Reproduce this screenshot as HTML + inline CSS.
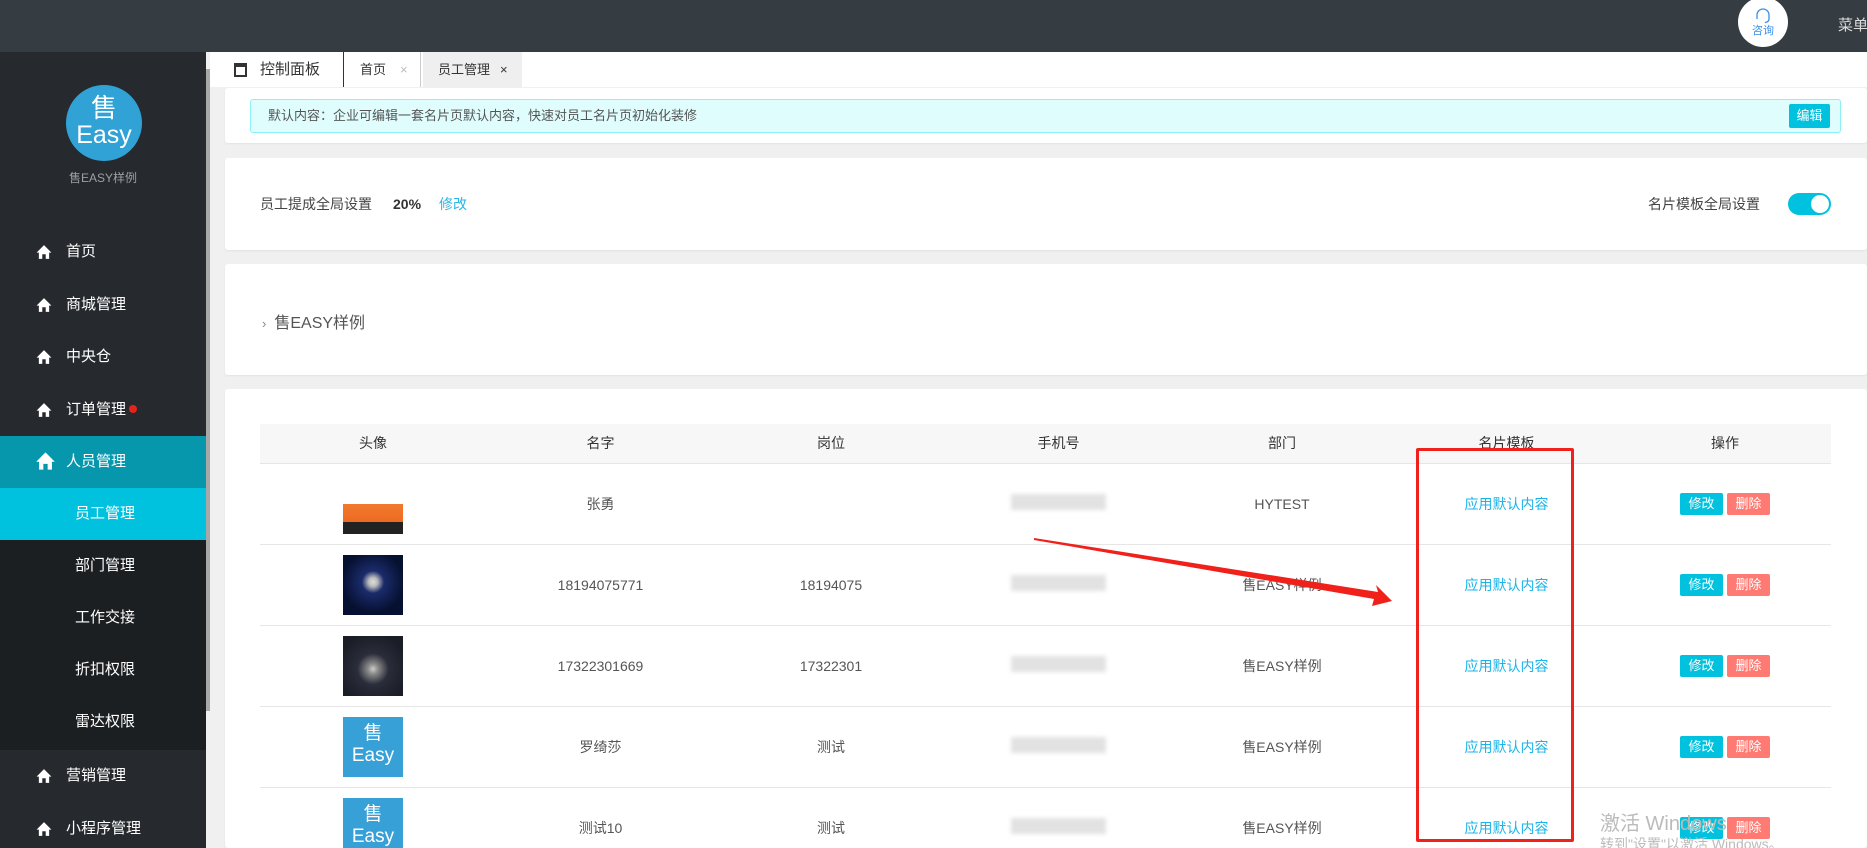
<!DOCTYPE html>
<html style="overflow:hidden;width:1867px;height:848px"><head><meta charset="utf-8"><style>
*{margin:0;padding:0;box-sizing:border-box}
body{width:1867px;height:848px;overflow:hidden;position:relative;background:#f0f0f0;font-family:"Liberation Sans","Noto Sans CJK SC",sans-serif;font-size:14px;color:#555}
.abs{position:absolute}
#top{left:0;top:0;width:1867px;height:52px;background:#363d42}
#side{left:0;top:52px;width:206px;height:796px;background:#262a2e}
.mi{position:absolute;left:0;width:206px;height:52px;line-height:52px;color:#fff;font-size:15px;padding-left:66px;white-space:nowrap}
.mi svg{position:absolute;left:36px;top:18px}
.sub{position:absolute;left:0;width:206px;height:52px;line-height:52px;color:#fff;font-size:15px;padding-left:75px;background:#1c1f22}
.card{position:absolute;left:225px;width:1642px;background:#fff;border-radius:3px;box-shadow:0 1px 2px rgba(0,0,0,.06)}
table{position:absolute;left:260px;top:424px;width:1571px;border-collapse:collapse;table-layout:fixed}
th{height:39px;background:#f7f7f7;font-weight:normal;color:#333;font-size:14px;border-bottom:1px solid #e6e6e6}
td{height:81px;text-align:center;border-bottom:1px solid #e6e6e6;color:#555;font-size:14px}
.lnk{color:#1ab4e8}
.b1,.b2{display:inline-block;width:43px;height:22px;line-height:22px;color:#fff;font-size:13px;border-radius:2px}
.b1{background:#00c1de}.b2{background:#ff7a72;margin-left:4px}
.av{width:60px;height:60px;margin:0 auto;display:block}
.blur{display:inline-block;width:95px;height:16px;background:#e2e2e2;filter:blur(2px)}
.ez{background:#37a0d6;color:#fff;text-align:center;font-size:19px;line-height:22px;padding-top:6px}
</style></head><body>
<div id="top" class="abs"></div>
<div class="abs" style="left:1738px;top:-3px;width:50px;height:50px;border-radius:50%;background:#fff;text-align:center">
<svg width="20" height="18" viewBox="0 0 20 18" style="margin-top:10px"><path d="M4 11V8a6 6 0 0 1 12 0v3M4 9v3M16 9v3M16 12q0 3-4 3.5" fill="none" stroke="#3a8ee6" stroke-width="1.3"/></svg>
<div style="font-size:11px;color:#3a8ee6;line-height:10px;margin-top:-2px">咨询</div></div>
<div class="abs" style="left:1838px;top:14px;color:#ddd;font-size:15px;white-space:nowrap">菜单</div>

<div id="side" class="abs">
<div class="abs" style="left:66px;top:33px;width:76px;height:76px;border-radius:50%;background:#30a2d6;color:#fff;text-align:center;font-size:26px;line-height:26px;padding-top:10px">售<br><span style="font-size:25px">Easy</span></div>
<div class="abs" style="left:0;top:117px;width:206px;text-align:center;color:#9aa0a6;font-size:12px">售EASY样例</div>
</div>
<div class="abs" style="left:206px;top:52px;width:4px;height:796px;background:#f0f0f0"></div>
<div class="abs" style="left:206px;top:69px;width:4px;height:642px;background:#a8a8a8"></div>

<svg width="0" height="0" style="position:absolute"><defs><symbol id="h" viewBox="0 0 14 14"><path d="M7 1L0.5 7.5H2.5V13H5.5V9H8.5V13H11.5V7.5H13.5Z" fill="#fff"/></symbol></defs></svg>
<div class="mi" style="top:226px"><svg width="16" height="16"><use href="#h"/></svg>首页</div>
<div class="mi" style="top:279px"><svg width="16" height="16"><use href="#h"/></svg>商城管理</div>
<div class="mi" style="top:331px"><svg width="16" height="16"><use href="#h"/></svg>中央仓</div>
<div class="mi" style="top:384px"><svg width="16" height="16"><use href="#h"/></svg>订单管理<span style="display:inline-block;width:8px;height:8px;border-radius:50%;background:#e5231b;margin-left:3px;vertical-align:1px"></span></div>
<div class="mi" style="top:436px;background:#0797ad"><svg width="21" height="20" style="left:35px;top:15px"><use href="#h"/></svg>人员管理</div>
<div class="sub" style="top:488px;background:#00c1de">员工管理</div>
<div class="sub" style="top:540px">部门管理</div>
<div class="sub" style="top:592px">工作交接</div>
<div class="sub" style="top:644px">折扣权限</div>
<div class="sub" style="top:696px;height:54px">雷达权限</div>
<div class="mi" style="top:750px"><svg width="16" height="16"><use href="#h"/></svg>营销管理</div>
<div class="mi" style="top:803px"><svg width="16" height="16"><use href="#h"/></svg>小程序管理</div>

<!-- tabs -->
<div class="abs" style="left:210px;top:52px;width:1657px;height:35px;background:#fff"></div>
<div class="abs" style="left:234px;top:52px;width:110px;height:35px;line-height:35px;font-size:15px;color:#333;padding-left:26px;border-right:1px solid #333">
<span style="position:absolute;left:0;top:11px;width:13px;height:14px;border:2px solid #333;border-top-width:4px"></span>控制面板</div>
<div class="abs" style="left:345px;top:52px;width:76px;height:35px;line-height:35px;font-size:13px;color:#333;padding-left:15px;border-right:1px solid #ccc">首页<span style="color:#bbb;margin-left:14px">×</span></div>
<div class="abs" style="left:423px;top:52px;width:99px;height:35px;line-height:35px;font-size:13px;color:#333;padding-left:15px;background:#efefef">员工管理<span style="margin-left:10px">×</span></div>

<div class="card" style="top:88px;height:55px"></div>
<div class="abs" style="left:250px;top:99px;width:1591px;height:34px;background:#e0fdfd;border:1px solid #8ef0f5;border-radius:3px;line-height:32px;padding-left:17px;font-size:13px;color:#555">默认内容：企业可编辑一套名片页默认内容，快速对员工名片页初始化装修
<span class="abs" style="right:10px;top:4px;width:41px;height:24px;line-height:24px;background:#00c1de;color:#fff;text-align:center;border-radius:2px;font-size:13px">编辑</span></div>

<div class="card" style="top:158px;height:92px"></div>
<div class="abs" style="left:260px;top:194px;font-size:14px;color:#444">员工提成全局设置<b style="margin-left:21px;color:#333">20%</b><span style="margin-left:18px;color:#2cb5e8">修改</span></div>
<div class="abs" style="left:1648px;top:194px;font-size:14px;color:#444">名片模板全局设置</div>
<div class="abs" style="left:1788px;top:193px;width:43px;height:22px;border-radius:11px;background:#00c1de"><span class="abs" style="right:2px;top:2px;width:18px;height:18px;border-radius:50%;background:#fff"></span></div>

<div class="card" style="top:264px;height:111px"></div>
<div class="abs" style="left:262px;top:309px;font-size:16px;color:#555"><span style="color:#888;font-size:13px;margin-right:8px">›</span>售EASY样例</div>

<div class="card" style="top:389px;height:459px"></div>
<table>
<colgroup><col style="width:226px"><col style="width:229px"><col style="width:232px"><col style="width:223px"><col style="width:224px"><col style="width:225px"><col style="width:212px"></colgroup>
<tr><th>头像</th><th>名字</th><th>岗位</th><th>手机号</th><th>部门</th><th>名片模板</th><th>操作</th></tr>
<tr><td><div class="av" style="background:linear-gradient(180deg,#fff 0,#fff 50%,#f07a30 50%,#ee6a20 80%,#222 80%);"></div></td><td>张勇</td><td></td><td><span class="blur"></span></td><td>HYTEST</td><td class="lnk">应用默认内容</td><td><span class="b1">修改</span><span class="b2">删除</span></td></tr>
<tr><td><div class="av" style="background:radial-gradient(circle at 50% 45%,#ddd 0,#bbb 10%,#1a2b6a 25%,#061030 70%)"></div></td><td>18194075771</td><td>18194075</td><td><span class="blur"></span></td><td>售EASY样例</td><td class="lnk">应用默认内容</td><td><span class="b1">修改</span><span class="b2">删除</span></td></tr>
<tr><td><div class="av" style="background:radial-gradient(circle at 50% 55%,#ccc 0,#888 12%,#2a2d3a 35%,#1a1c26 80%)"></div></td><td>17322301669</td><td>17322301</td><td><span class="blur"></span></td><td>售EASY样例</td><td class="lnk">应用默认内容</td><td><span class="b1">修改</span><span class="b2">删除</span></td></tr>
<tr><td><div class="av ez">售<br>Easy</div></td><td>罗绮莎</td><td>测试</td><td><span class="blur"></span></td><td>售EASY样例</td><td class="lnk">应用默认内容</td><td><span class="b1">修改</span><span class="b2">删除</span></td></tr>
<tr><td><div class="av ez">售<br>Easy</div></td><td>测试10</td><td>测试</td><td><span class="blur"></span></td><td>售EASY样例</td><td class="lnk">应用默认内容</td><td><span class="b1">修改</span><span class="b2">删除</span></td></tr>
</table>

<div class="abs" style="left:1416px;top:448px;width:158px;height:394px;border:3px solid #f0201a;border-radius:2px"></div>
<svg class="abs" style="left:0;top:0" width="1867" height="848"><path d="M1034 538L1378 592L1376 585L1392 601L1372 606L1374 599L1034 540Z" fill="#f0201a"/></svg>
<div class="abs" style="left:1600px;top:807px;color:#bbb;font-size:20px;white-space:nowrap">激活 Windows</div>
<div class="abs" style="left:1600px;top:834px;color:#bbb;font-size:14px;white-space:nowrap">转到"设置"以激活 Windows。</div>
</body></html>
